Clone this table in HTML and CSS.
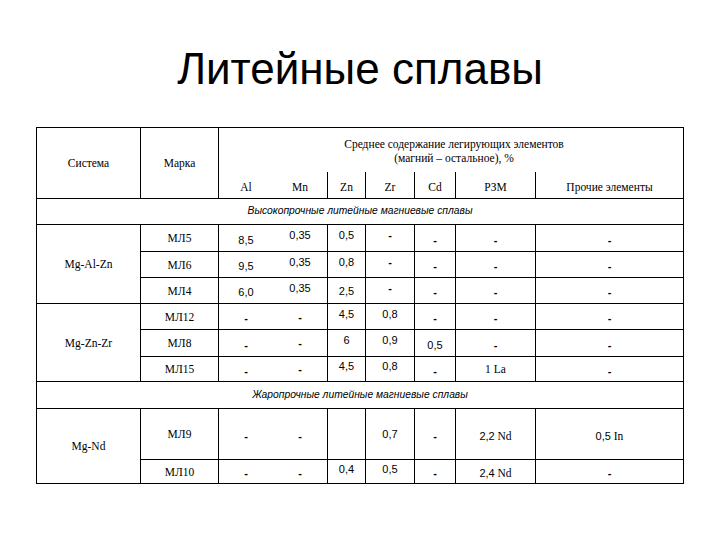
FILE: index.html
```html
<!DOCTYPE html>
<html lang="ru">
<head>
<meta charset="utf-8">
<title>Литейные сплавы</title>
<link rel="stylesheet" href="styles.css">
</head>
<body>
<div class="slide">
  <h1 class="title">Литейные сплавы</h1>
  <div class="tbl">
    <div class="c r2">Система</div>
    <div class="c r2">Марка</div>
    <div class="c avg">Среднее содержание легирующих элементов<br>(магний – остальное), %</div>
    <div class="c hd nr">Al</div>
    <div class="c hd">Mn</div>
    <div class="c hd">Zn</div>
    <div class="c hd">Zr</div>
    <div class="c hd">Cd</div>
    <div class="c hd">РЗМ</div>
    <div class="c hd">Прочие элементы</div>

    <div class="c full cat">Высокопрочные литейные магниевые сплавы</div>

    <div class="c r3">Mg-Al-Zn</div>
    <div class="c">МЛ5</div>
    <div class="c num nr lo">8,5</div>
    <div class="c num hi">0,35</div>
    <div class="c num hi">0,5</div>
    <div class="c num hi dash">-</div>
    <div class="c num lo dash">-</div>
    <div class="c num lo dash">-</div>
    <div class="c num lo dash">-</div>
    <div class="c">МЛ6</div>
    <div class="c num nr lo">9,5</div>
    <div class="c num hi">0,35</div>
    <div class="c num hi">0,8</div>
    <div class="c num hi dash">-</div>
    <div class="c num lo dash">-</div>
    <div class="c num lo dash">-</div>
    <div class="c num lo dash">-</div>
    <div class="c">МЛ4</div>
    <div class="c num nr lo">6,0</div>
    <div class="c num hi">0,35</div>
    <div class="c num">2,5</div>
    <div class="c num hi dash">-</div>
    <div class="c num lo dash">-</div>
    <div class="c num lo dash">-</div>
    <div class="c num lo dash">-</div>

    <div class="c r3">Mg-Zn-Zr</div>
    <div class="c">МЛ12</div>
    <div class="c num nr lo dash">-</div>
    <div class="c num dash">-</div>
    <div class="c num hi">4,5</div>
    <div class="c num hi">0,8</div>
    <div class="c num lo dash">-</div>
    <div class="c num lo dash">-</div>
    <div class="c num lo dash">-</div>
    <div class="c">МЛ8</div>
    <div class="c num nr lo dash">-</div>
    <div class="c num dash">-</div>
    <div class="c num hi">6</div>
    <div class="c num hi">0,9</div>
    <div class="c num lo">0,5</div>
    <div class="c num lo dash">-</div>
    <div class="c num lo dash">-</div>
    <div class="c">МЛ15</div>
    <div class="c num nr lo dash">-</div>
    <div class="c num dash">-</div>
    <div class="c num hi">4,5</div>
    <div class="c num hi">0,8</div>
    <div class="c num lo dash">-</div>
    <div class="c">1 La</div>
    <div class="c num lo dash">-</div>

    <div class="c full cat">Жаропрочные литейные магниевые сплавы</div>

    <div class="c r2">Mg-Nd</div>
    <div class="c">МЛ9</div>
    <div class="c num nr lo dash">-</div>
    <div class="c num lo dash">-</div>
    <div class="c"></div>
    <div class="c num">0,7</div>
    <div class="c num lo dash">-</div>
    <div class="c lo"><span class="n">2,2</span>&nbsp;Nd</div>
    <div class="c lo"><span class="n">0,5</span>&nbsp;In</div>
    <div class="c">МЛ10</div>
    <div class="c num nr lo dash">-</div>
    <div class="c num lo dash">-</div>
    <div class="c num hi">0,4</div>
    <div class="c num hi">0,5</div>
    <div class="c num lo dash">-</div>
    <div class="c lo"><span class="n">2,4</span>&nbsp;Nd</div>
    <div class="c num lo dash">-</div>
  </div>
</div>
</body>
</html>
```

FILE: styles.css
```css
* { box-sizing: border-box; }

body {
  margin: 0;
  background: #fff;
  color: #000;
  font-family: "Liberation Sans", Arial, sans-serif;
}

.slide {
  width: 720px;
  height: 540px;
  overflow: hidden;
}

.title {
  margin: 43px 0 0;
  height: 52px;
  font-size: 44px;
  line-height: 52px;
  font-weight: normal;
  text-align: center;
}

.tbl {
  margin: 32px 0 0 36px;
  width: 648px;
  display: grid;
  grid-template-columns: 104px 78px 54px 55px 38px 49px 41px 80px 148px;
  grid-template-rows: 44px 27px 26px 27px 26px 26px 26px 27px 25px 27px 51px 24px;
  border-left: 1px solid #000;
  border-top: 1px solid #000;
  font-family: "Liberation Serif", "Times New Roman", serif;
  font-size: 11.5px;
  line-height: 14px;
}

.c {
  display: flex;
  align-items: center;
  justify-content: center;
  text-align: center;
  border-right: 1px solid #000;
  border-bottom: 1px solid #000;
  white-space: nowrap;
}

.r2 { grid-row: span 2; }
.r3 { grid-row: span 3; }
.full { grid-column: span 9; }
.nr { border-right: none; }

.avg {
  grid-column: span 7;
  border-bottom: none;
  padding-top: 1px;
  padding-left: 6px;
}

.hd { padding-top: 4px; }

.cat {
  font-family: "Liberation Sans", Arial, sans-serif;
  font-style: italic;
  font-size: 10.3px;
  padding-bottom: 1px;
}

.num, .n {
  font-family: "Liberation Sans", Arial, sans-serif;
  font-size: 11px;
}

.dash { font-weight: bold; }

.hi { padding-bottom: 6px; }
.lo { padding-top: 3px; }
```
